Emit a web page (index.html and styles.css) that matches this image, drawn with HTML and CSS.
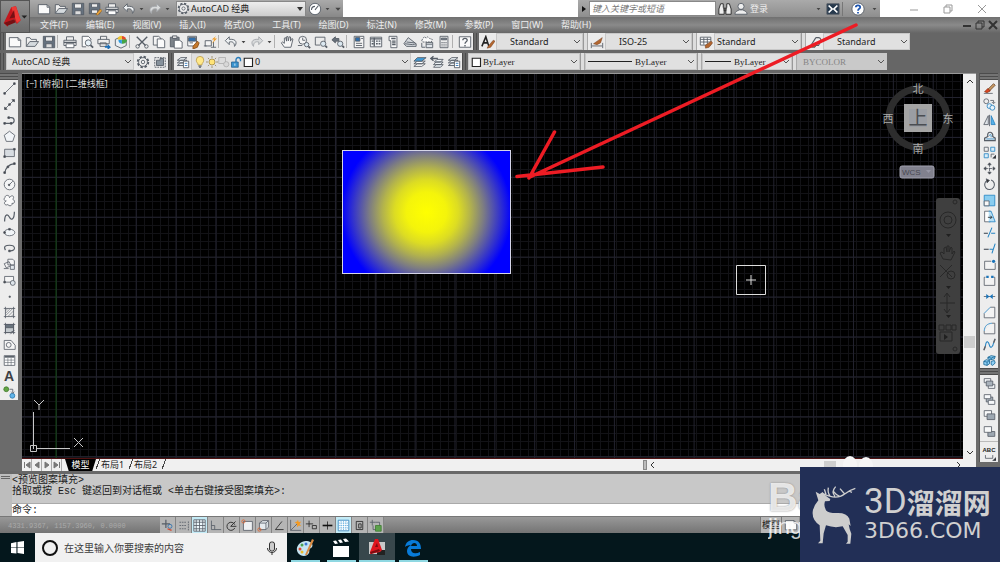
FILE: index.html
```html
<!DOCTYPE html>
<html lang="zh-CN">
<head>
<meta charset="utf-8">
<title>AutoCAD 经典</title>
<link rel="stylesheet" href="styles.css">
</head>
<body>
<svg class="defs" aria-hidden="true">
  <symbol id="new" viewBox="0 0 16 16"><path d="M1.5 3h10l3 3v7.500h-13z" fill="#fafafa"/><path d="M11.500 3v3h3"/></symbol>
  <symbol id="open" viewBox="0 0 16 16"><path d="M1.500 13V3h4l1.500 2h6v2.500" fill="#eee"/><path d="M1.500 13l4-5.500h10L11.500 13z" fill="#d5dade"/></symbol>
  <symbol id="save" viewBox="0 0 16 16"><path d="M1.500 1.500h13v13h-13z" fill="#66727f"/><path d="M4 2h8v5H4z" fill="#eee"/><path d="M4.500 14V10h7v4" fill="#ddd"/></symbol>
  <symbol id="saveas" viewBox="0 0 16 16"><path d="M1.500 1.500h12v12h-12z" fill="#66727f"/><path d="M4 2h7v4H4zM4 9h7v4H4z" fill="#eee"/><path d="M9 14l5-6 2 2-5 5z" fill="#e9a23b" stroke="#7a4a10" stroke-width=".5"/></symbol>
  <symbol id="print" viewBox="0 0 16 16"><path d="M4 6V2h8v4M1 6h14v6H1z" fill="#eee"/><path d="M3.500 10h9v4.500h-9z" fill="#fff"/><path d="M1 8.500h14" stroke-width="1.500"/></symbol>
  <symbol id="preview" viewBox="0 0 16 16"><path d="M12.500 6V4.500l-3-3h-7v12H7" fill="#fafafa"/><circle cx="9.500" cy="9" r="3.500" fill="#e8f2f8"/><path d="M12 11.500l3 3" stroke-width="2"/></symbol>
  <symbol id="publish" viewBox="0 0 16 16"><path d="M4 5V1.500h7V5M1 5h13v5H1zM3.500 9h7v4h-7z" fill="#eee"/><path d="M9 12.500h3V10l4 4-4 3v-2.500H9z" fill="#1c6db5" stroke="none"/></symbol>
  <symbol id="dwf" viewBox="0 0 16 16"><path d="M1.500 5L8 2l6 4v6l-6 3-6.500-3z" fill="#e9eef2"/><path d="M9 5V1a5 5 0 0 1 5 5z" fill="#e64a28" stroke="none"/><path d="M9 5h6a5 5 0 0 1-6 5z" fill="#44a548" stroke="none"/><path d="M9 5v5a5 5 0 0 1-4-5z" fill="#2f9be0" stroke="none"/><path d="M9 5H4a5 5 0 0 1 5-4z" fill="#f2c72c" stroke="none"/></symbol>
  <symbol id="cut" viewBox="0 0 16 16"><path d="M2 2l10 10M14 2L4 12" stroke-width="1.600"/><circle cx="3" cy="13" r="2"/><circle cx="13" cy="13" r="2"/></symbol>
  <symbol id="copyclip" viewBox="0 0 16 16"><path d="M1.500 1.500h6l2.500 2v8H1.500z" fill="#f3f3f3"/><path d="M6 4.500h6l2.500 2v8H6z" fill="#fafafa"/></symbol>
  <symbol id="paste" viewBox="0 0 16 16"><path d="M1.500 2.500h10v11h-10z" fill="#7c838a"/><path d="M4 1h5v3H4z" fill="#ddd"/><path d="M6 6h6l3 2v7H6z" fill="#fff"/></symbol>
  <symbol id="match" viewBox="0 0 16 16"><path d="M2 1.500h10v11H2z" fill="#fff"/><path d="M3 3h8v4H3z" fill="#2f71b2"/><path d="M4 9h4"/><path d="M8 13l5-6 2 2-2 5-5 2z" fill="#c5792b" stroke="#8a4f18"/></symbol>
  <symbol id="blockedit" viewBox="0 0 16 16"><path d="M2.500 6.500h7v6h-7z" fill="#f4f4f4"/><path d="M1 12.500h3M12 8v6M9 14h6"/><path d="M15 1l-5 4h3l-3 5 6-6h-3z" fill="#f29a1f" stroke="none"/></symbol>
  <symbol id="undo" viewBox="0 0 16 16"><path d="M6 2L1.500 6.500 6 11V8c4-1 6 1 6 5 3-3 3-9-6-8z" fill="#eef1f3"/></symbol>
  <symbol id="redo" viewBox="0 0 16 16"><path d="M10 2l4.500 4.500L10 11V8c-4-1-6 1-6 5-3-3-3-9 6-8z" fill="#d8dadb" stroke="#a2a6aa"/></symbol>
  <symbol id="dd" viewBox="0 0 8 16"><path d="M1 6.500h6L4 10z" fill="#444" stroke="none"/></symbol>
  <symbol id="hand" viewBox="0 0 16 16"><path d="M5 14L1.500 9l1.300-1L5 9.500V3.500L6.500 3 7.500 7V2L9 1.700l.5 5L10.500 2l1.500.3V7l1.500-3 1.300.7L12.500 14z" fill="#f6f6f6"/></symbol>
  <symbol id="zoomrt" viewBox="0 0 16 16"><circle cx="6.500" cy="6" r="4.500" fill="#f5f5f5"/><path d="M6.500 3v3h3M1 12h5"/><circle cx="11" cy="11" r="2.500" fill="#dce9f1"/><path d="M13 13l2 2" stroke-width="2"/></symbol>
  <symbol id="zoomwin" viewBox="0 0 16 16"><path d="M1.500 2.500h11V8M7 11.500H1.500v-9"/><circle cx="10.500" cy="10" r="3" fill="#dce9f1"/><path d="M13 12.500l2 2" stroke-width="2"/></symbol>
  <symbol id="zoomprev" viewBox="0 0 16 16"><path d="M5 2L1 5.500 5 9V7h4V4H5z" fill="#67707a"/><circle cx="10.500" cy="10" r="3" fill="#dce9f1"/><path d="M13 12.500l2 2" stroke-width="2"/></symbol>
  <symbol id="props" viewBox="0 0 16 16"><path d="M2.500 1.500h11v13h-11z" fill="#f5f5f5"/><path d="M4 3h5v4H4z" fill="#2b6dad"/><path d="M10.500 4h2M4.500 9.500h7M4.500 12h7"/></symbol>
  <symbol id="dcenter" viewBox="0 0 16 16"><path d="M1.500 2.500h13v11h-13z" fill="#f0f3f5"/><path d="M6 3v10M1.500 4.500h13M3 7h2M3 10h2M8 7h2M11 7h2M8 10h2M11 10h2" stroke-width="1.500"/></symbol>
  <symbol id="palette" viewBox="0 0 16 16"><path d="M3.500 1.500h9v13h-7v-8h-2z" fill="#fafafa"/><path d="M6 4h5M7 7h4M7 9h4M7 11h4" stroke-width="1.500"/></symbol>
  <symbol id="sheets" viewBox="0 0 16 16"><path d="M1 10l5-7 9 7v3H4z" fill="#d7dbdf"/><path d="M2 10l9 1 4-1M4 8l9 1"/></symbol>
  <symbol id="markup" viewBox="0 0 16 16"><path d="M2 6l3-4 2 1.500L9 2l2 2 3 1-1 3H3z" fill="#fafafa" stroke-dasharray="2 1"/><path d="M7 8.500h7.500v6H7zM2 9v5h4" fill="#e0e5ea"/><path d="M7 10.500h7"/></symbol>
  <symbol id="calc" viewBox="0 0 16 16"><path d="M3.500 1.500h9v13h-9z" fill="#f2f2f2"/><path d="M5 3.500h6v2H5z" fill="#7d8791"/><path d="M5 8.500h6M5 10.500h6M5 12.500h6" stroke-dasharray="1.500 .8"/></symbol>
  <symbol id="help" viewBox="0 0 16 16"><path d="M1.500 2h13v12h-13z" fill="#fafafa"/><path d="M5.500 6c0-3 5-3 5 0 0 2-2.500 1.500-2.500 4M8 11.500v1.500" stroke-width="1.500"/></symbol>
  <symbol id="textstyle" viewBox="0 0 16 16"><path d="M1 13L5.500 2 9 13M3 9h5" stroke="#222" stroke-width="1.800"/><path d="M8 13l6-7 2 1-5 7-4 1z" fill="#b4672f" stroke="#754020" stroke-width=".6"/></symbol>
  <symbol id="dimstyle" viewBox="0 0 16 16"><path d="M1.500 9v6M14.500 9v6M2 12.500h12"/><path d="M4 10l10-7-2 6-4 2z" fill="#b4672f" stroke="#754020" stroke-width=".6"/></symbol>
  <symbol id="tablestyle" viewBox="0 0 16 16"><path d="M1.500 2.500h12v9h-12z" fill="#fff"/><path d="M1.500 5h12M5.500 3v8M9.500 3v8M2 8h11"/><path d="M7 12l7-5 1.500 2-4 5-4 1z" fill="#b4672f" stroke="#754020" stroke-width=".6"/></symbol>
  <symbol id="leader" viewBox="0 0 16 16"><path d="M2 14L9 3M9 3h3a3 3 0 0 1 2 5l-2 4H6" fill="#eee" stroke-width="1.300"/><path d="M4 14l6-6 1 1-3 5z" fill="#b4672f"/></symbol>
  <symbol id="gear" viewBox="0 0 16 16"><circle cx="8" cy="8" r="6" stroke-width="2.200" stroke-dasharray="2.700 2"/><circle cx="8" cy="8" r="5" fill="#f1f1f1"/><circle cx="8" cy="8" r="2"/></symbol>
  <symbol id="frame" viewBox="0 0 16 16"><path d="M2 3h12v11H2z" stroke-dasharray="2 1"/><path d="M4 6h4V4h4v8H4z" fill="#87929c"/></symbol>
  <symbol id="layers" viewBox="0 0 16 16"><path d="M1.500 12l4-3h7l-4 3zM1.500 9l4-3h7l-4 3zM1.500 6l4-3h7l-4 3z" fill="#eef3f6"/><path d="M8.500 7h6v7.500h-6z" fill="#fff"/><path d="M10 9.500h3M10 12h3" stroke="#2d74b5"/></symbol>
  <symbol id="layerblue" viewBox="0 0 16 16"><path d="M1 13l4-3h9l-4 3zM1 10l4-3h9l-4 3z" fill="#fff"/><path d="M1 7l4-4h10l-5 4z" fill="#3f9ad6"/></symbol>
  <symbol id="layerprev" viewBox="0 0 16 16"><path d="M1 4h8M4 1.500L1 4l3 2.500" stroke-width="1.500"/><path d="M4 14l3-3h8l-3 3zM4 11l3-3h8l-3 3zM5 8l3-3h7l-3 3z" fill="#eef3f6"/></symbol>
  <symbol id="bulb" viewBox="0 0 16 16"><path d="M5.500 12c0-3-2.500-3-2.500-6.500a5 5 0 0 1 10 0c0 3.500-2.500 3.500-2.500 6.500z" fill="#ffe889" stroke="#b7953f"/><path d="M6 13.500h4M7 15.500h2" stroke-width="1.500"/></symbol>
  <symbol id="sun" viewBox="0 0 16 16"><path d="M8 0v16M0 8h16M2.500 2.500l11 11M13.500 2.500l-11 11" stroke="#8b7a4e" stroke-dasharray="2.500 11"/><circle cx="8" cy="8" r="4" fill="#ffe477" stroke="#9b8142"/></symbol>
  <symbol id="vpfreeze" viewBox="0 0 16 16"><path d="M1 2h9v8H1z" fill="#ddd" stroke="#aaa"/><circle cx="11" cy="11" r="3.500" fill="#d8d8d8" stroke="#aaa"/></symbol>
  <symbol id="lock" viewBox="0 0 16 16"><path d="M8 8V5a3 3 0 0 1 6 0v2" stroke="#287bb9" stroke-width="1.800"/><path d="M2 8h9v7H2z" fill="#3a94cf" stroke="#245f8d"/><path d="M6.500 10v3" stroke="#fff"/></symbol>
  <symbol id="box" viewBox="0 0 16 16"><path d="M3 3h11v11H3z" fill="#fff" stroke="#222" stroke-width="1.500"/></symbol>
  <symbol id="line" viewBox="0 0 16 16"><path d="M2 14L14 2"/><path d="M1 13h2v2H1zM13 1h2v2h-2z" fill="#333"/></symbol>
  <symbol id="xline" viewBox="0 0 16 16"><path d="M2 14L14 2"/><path d="M2 14v-3l3 3zM14 2h-3l3 3zM7 7h2v2H7z" fill="#333"/></symbol>
  <symbol id="pline" viewBox="0 0 16 16"><path d="M2 11.500h8c5 0 5-7 0-7H6" stroke-width="1.400"/><path d="M1 10.500h2v2H1zM9 10.500h2v2H9zM6 3.500h2v2H6z" fill="#333"/></symbol>
  <symbol id="polygon" viewBox="0 0 16 16"><path d="M8 1.500l6.500 5L12 14H4L1.500 6.500z" fill="#f2f5f8"/></symbol>
  <symbol id="rect" viewBox="0 0 16 16"><path d="M2 4h12v9H2z" fill="#d7dce1"/><path d="M1 12h2v2H1zM13 3h2v2h-2z" fill="#333"/></symbol>
  <symbol id="arc" viewBox="0 0 16 16"><path d="M2 14C3 7 7 3 14 2" stroke-width="1.400"/><path d="M1 12h2v2H1zM5 5h2v2H5zM13 1h2v2h-2z" fill="#333"/></symbol>
  <symbol id="circle" viewBox="0 0 16 16"><circle cx="8" cy="8" r="6.500" fill="#f4f5f6"/><path d="M8 8l4-4" /><circle cx="7.500" cy="8.500" r="1" fill="#333"/></symbol>
  <symbol id="cloud" viewBox="0 0 16 16"><path d="M8 4.500c0-4-6-3.500-5.500 0C0 6 2 9 4 8.500 0 10 2 15 6 13c2 3 6 1 5-1.500 4 1 4-4 1-5C15 3 11 0 8 4.500z" fill="#fafafa"/></symbol>
  <symbol id="spline" viewBox="0 0 16 16"><path d="M2 14C2 4 6 5 8 9s6 3 6-7" stroke-width="1.500"/></symbol>
  <symbol id="ellipse" viewBox="0 0 16 16"><ellipse cx="8" cy="8" rx="6.500" ry="4" fill="#f1f5f8"/><path d="M7 3h2v2H7zM1 7h2v2H1z" fill="#333"/></symbol>
  <symbol id="earc" viewBox="0 0 16 16"><path d="M3 10C0 5 4 4 8 4c8 0 8 7 1 7" stroke-width="1.400"/><path d="M7 10h2v2H7z" fill="#333"/></symbol>
  <symbol id="insert" viewBox="0 0 16 16"><path d="M6 1.500h6l2 2v5H6zM1.500 7l6-2.500 2.500 5-6 2.500z" fill="#f5f5f5"/><path d="M9 9h5v5H9zM1 13h6" fill="#e2e7ec"/></symbol>
  <symbol id="block" viewBox="0 0 16 16"><path d="M2 3h11v7H2z" fill="#f5f5f5"/><circle cx="12" cy="11" r="3" fill="#dde4ea"/><path d="M1 9h2v2H1z" fill="#333"/></symbol>
  <symbol id="point" viewBox="0 0 16 16"><path d="M7.500 7.500h1.500v1.500H7.500z" fill="#555"/></symbol>
  <symbol id="hatch" viewBox="0 0 16 16"><path d="M1 3h14M1 13h14M3 1v14M13 1v14"/><path d="M3 6l3-3M3 9l6-6M3 12l9-9M6 13l7-7M10 13l3-3" stroke-width=".7"/></symbol>
  <symbol id="gradienticon" viewBox="0 0 16 16"><path d="M3 3h10v4H3z" fill="#68737d"/><path d="M3 7h10v4L9 13H3z" fill="#c4cace"/><path d="M1 3h14M1 13h14M3 1v14M13 1v14M9 15l5-5"/></symbol>
  <symbol id="region" viewBox="0 0 16 16"><path d="M1.500 3H10l5 6v5H1.500z" fill="#f5f5f5"/><circle cx="7" cy="8.500" r="3"/></symbol>
  <symbol id="table" viewBox="0 0 16 16"><path d="M1.500 2h13v12h-13z" fill="#fff"/><path d="M2 3.500h12" stroke-width="2"/><path d="M2 7.500h12M2 10.500h12M6 5v9M10 5v9" stroke-width=".7"/></symbol>
  <symbol id="addsel" viewBox="0 0 16 16"><circle cx="4" cy="4" r="3" fill="#63a545" stroke="#427b2c"/><circle cx="11.500" cy="12" r="3" fill="#61b5ea" stroke="#2676ae"/><path d="M8 4h4v4m-2-1l2 2 2-2"/></symbol>
  <symbol id="erase" viewBox="0 0 16 16"><path d="M1 14h11"/><path d="M6 9l7-7 2 2-7 7z" fill="#c99a62" stroke="#69472c"/><path d="M2 12l4-4 3 3-4 2z" fill="#e0451e" stroke="#8a3218"/></symbol>
  <symbol id="copy" viewBox="0 0 16 16"><circle cx="4" cy="4" r="3"/><path d="M9 3h4v3m-2-1l2 2 2-2"/><g stroke="#257fbd"><circle cx="8" cy="10" r="3" fill="#e7f3fb"/><circle cx="11.500" cy="12" r="3" fill="#e7f3fb"/></g></symbol>
  <symbol id="mirror" viewBox="0 0 16 16"><path d="M6.500 2v11H1z" fill="#dfe4e8"/><path d="M8 1v14"/><path d="M10 2v11h5z" fill="#56b2ea" stroke="#267fbd"/></symbol>
  <symbol id="offset" viewBox="0 0 16 16"><path d="M2 13v-3l4-2c-2-7 7-7 6 0l3 2v3z" stroke-width="1.500"/><path d="M4 11h10M8 7c0-2 2-2 2 0v2" stroke="#2484c4"/></symbol>
  <symbol id="array" viewBox="0 0 16 16"><path d="M1.500 1.500h5v5h-5z"/><g stroke="#2484c4"><path d="M9.500 1.500h5v5h-5zM1.500 9.500h5v5h-5z" fill="#d9edf9"/></g><path d="M10 14v-4h4"/><path d="M12 15h4v-4z" fill="#222"/></symbol>
  <symbol id="move" viewBox="0 0 16 16"><path d="M8 2v12M2 8h12" stroke-dasharray="4 1"/><path d="M8 1l2 2.500H6zM8 15l2-2.500H6zM1 8l2.500-2v4zM15 8l-2.500-2v4z" fill="#333"/></symbol>
  <symbol id="rotate" viewBox="0 0 16 16"><path d="M5 3a6 6 0 1 0 5-.5" stroke-width="1.300"/><path d="M4 1l4 2-3 3z" fill="#333"/></symbol>
  <symbol id="scale" viewBox="0 0 16 16"><path d="M1.500 1.500h13v13h-13z" fill="#8acdf0" stroke="#2484c4"/><path d="M1.500 8.500h6v6h-6z" fill="#f8f8f8"/></symbol>
  <symbol id="stretch" viewBox="0 0 16 16"><path d="M2 1.500h7v13H2z" fill="#fff"/><path d="M7 1.500h3l5 13H7" fill="#b7dff5" stroke="#2484c4"/><path d="M6 9h5M9 7l2 2-2 2" stroke="#222"/></symbol>
  <symbol id="trim" viewBox="0 0 16 16"><path d="M1 9h5" stroke-width="1.500"/><path d="M6 14l5-12M10 9h5" stroke="#2484c4" stroke-width="1.300"/></symbol>
  <symbol id="extend" viewBox="0 0 16 16"><path d="M1 9h6" stroke-width="1.500"/><path d="M8 9h4M11 14l4-12" stroke="#2484c4" stroke-width="1.300"/></symbol>
  <symbol id="breakpt" viewBox="0 0 16 16"><path d="M10 4H2v10h13V6" fill="#f3f3f3"/><circle cx="13" cy="4" r="2" fill="#1b74b9" stroke="none"/></symbol>
  <symbol id="break" viewBox="0 0 16 16"><path d="M3 4H1.500v10h13V4H13" fill="#f3f3f3"/><path d="M4 2h3v3H4zM10 2h3v3h-3z" fill="#1b74b9" stroke="none"/></symbol>
  <symbol id="join" viewBox="0 0 16 16"><path d="M1 8h14"/><path d="M4 5l4 3-4 3zM12 5L8 8l4 3z" fill="#1b74b9" stroke="none"/></symbol>
  <symbol id="chamfer" viewBox="0 0 16 16"><path d="M1.500 9v5.500h13v-13H9" fill="#f3f3f3"/><path d="M1.500 9L9 1.500" stroke="#2484c4"/></symbol>
  <symbol id="fillet" viewBox="0 0 16 16"><path d="M1.500 11v3.500h13v-13H11" fill="#f3f3f3"/><path d="M1.500 11C2 5 5 2 11 1.500" stroke="#2484c4"/></symbol>
  <symbol id="blend" viewBox="0 0 16 16"><path d="M1 15l2-5M13 6l2-5" stroke-width="1.800"/><path d="M3 10C4 1 7 5 8 9s4 3 5-3" stroke="#2484c4" stroke-width="1.300"/></symbol>
  <symbol id="explode" viewBox="0 0 16 16"><g stroke="#186594" fill="#8fd0f5"><path d="M1 9l3-2 4 1v4l-3 2-4-1zM6 4l4-2 5 1-1 3-5 1-3-1zM10 9l4-1 1 3-3 3-2-1z"/></g><path d="M1 9l4 1 3-2M5 10v4M6 4l4 1 5-2M10 5v2" stroke="#186594"/></symbol>
  <symbol id="order" viewBox="0 0 16 16"><path d="M1.500 2h8v5h-8zM6.500 9h8v5h-8z" fill="#f6f8fa"/><path d="M4 5h8v6H4z" fill="#a9b2bb"/></symbol>
  <symbol id="orderback" viewBox="0 0 16 16"><path d="M4 5h8v6H4z" fill="#a9b2bb"/><path d="M1.500 2h8v5h-8zM6.500 9h8v5h-8z" fill="#f6f8fa"/></symbol>
  <symbol id="orderup" viewBox="0 0 16 16"><path d="M1.500 2h9v7h-9z" fill="#f8f9fa"/><path d="M5 6h9.500v7H5z" fill="#9da7b1"/></symbol>
  <symbol id="order2" viewBox="0 0 16 16"><path d="M6 8h8.500v6H6z" fill="#9da7b1"/><path d="M1.500 2h9v7h-9z" fill="#f8f9fa"/></symbol>
  <symbol id="snap" viewBox="0 0 16 16"><path d="M6 1v10M1 6h10" stroke-width="1.500"/><circle cx="11" cy="9" r="2.500" stroke="#2a6ead"/><path d="M8 12l5 2" stroke="#d4482c" stroke-width="1.500"/></symbol>
  <symbol id="grid" viewBox="0 0 16 16"><path d="M1 1h14v14H1z" fill="#eef8fc"/><path d="M1 4h14M1 8h14M1 12h14M4 1v14M8 1v14M12 1v14"/></symbol>
  <symbol id="infer" viewBox="0 0 16 16"><path d="M3 4h8M3 8h8M3 12h8M14 3v11" stroke-dasharray="2 1"/></symbol>
  <symbol id="ortho" viewBox="0 0 16 16"><path d="M3 2v11h12M3 8h4v5"/></symbol>
  <symbol id="polar" viewBox="0 0 16 16"><path d="M12 7a5 5 0 1 0 0 4M7 9h7M7 9l6-6" stroke="#333" stroke-width="1.200"/></symbol>
  <symbol id="osnap" viewBox="0 0 16 16"><path d="M3 3h11v11H3z" fill="#eef0f2"/><circle cx="3" cy="3" r="2" stroke="#df632d"/></symbol>
  <symbol id="cube3" viewBox="0 0 16 16"><path d="M3 5l4-3h7v8l-3 3H3z" fill="#e5eaee"/><path d="M3 5h8v8M11 5l3-3"/><circle cx="3" cy="13" r="2" stroke="#df632d"/></symbol>
  <symbol id="angle" viewBox="0 0 16 16"><path d="M13 13H3L11 3" stroke="#222"/></symbol>
  <symbol id="ducs" viewBox="0 0 16 16"><path d="M2 1v13h13M2 14l9-9"/><path d="M11 1l1 3 3-1-2 3 2 3-3-1-2 2V6L7 4l3-1z" fill="#f59a21" stroke="none"/></symbol>
  <symbol id="dyn" viewBox="0 0 16 16"><path d="M5 2v8M1 6h9M9 8h5v4H9z" stroke="#222"/></symbol>
  <symbol id="lwt" viewBox="0 0 16 16"><path d="M8 3v10" stroke="#222"/><path d="M2 8h12" stroke="#111" stroke-width="2"/></symbol>
  <symbol id="tpy" viewBox="0 0 16 16"><path d="M1.500 1.500h13v13h-13z" fill="#fff" stroke="#2d80bd"/><path d="M2 5h12M2 8h12M2 11h12M5 2v12M8 2v12M11 2v12" stroke="#62afe0" stroke-dasharray="1.500 1"/></symbol>
  <symbol id="qp" viewBox="0 0 16 16"><path d="M4 3h8v10H4zM7 6h3v5H7z" stroke="#222"/></symbol>
  <symbol id="cycle" viewBox="0 0 16 16"><path d="M4 1v7M1 4h7M8 4h5v5M5 8v5h4"/><path d="M8 8h7v7H8z" fill="#5ca14c" stroke="#3f7d31"/></symbol>
  <symbol id="mintri" viewBox="0 0 8 8"><path d="M2 1l4 3-4 3z" fill="#111" stroke="none"/></symbol>
  <symbol id="min" viewBox="0 0 12 12"><path d="M2 7h8"/></symbol>
  <symbol id="restore" viewBox="0 0 12 12"><path d="M4 4V2h6v6H8M2 4h6v6H2z"/></symbol>
  <symbol id="close" viewBox="0 0 12 12"><path d="M2 2l8 8M10 2l-8 8"/></symbol>
</svg>

<div class="app">
  <header class="head">
    <button class="appbtn" aria-label="应用程序菜单">
      <svg viewBox="0 0 30 29"><path d="M3 21L11 4l5-1 5 15-4 4-3-5-5 2-2 6z" fill="#c3171c"/><path d="M11 4l5-1 5 15-4 3z" fill="#ec3a36"/><path d="M9 16l5-9 1 8zM3 21l11-4 2 3-9 4z" fill="#761013"/><path d="M22 13h6l-3 3z" fill="#222"/></svg>
    </button>
    <div class="headrows">
      <div class="titlebar">
        <div class="quick">
          <button aria-label="新建"><svg class="ic"><use href="#new"/></svg></button>
          <button aria-label="打开"><svg class="ic"><use href="#open"/></svg></button>
          <button aria-label="保存"><svg class="ic"><use href="#save"/></svg></button>
          <button aria-label="另存为"><svg class="ic"><use href="#saveas"/></svg></button>
          <button aria-label="打印"><svg class="ic"><use href="#print"/></svg></button>
          <button aria-label="放弃"><svg class="ic"><use href="#undo"/></svg></button>
          <button class="narrow" aria-label="放弃列表"><svg class="ddi"><use href="#dd"/></svg></button>
          <button aria-label="重做"><svg class="ic"><use href="#redo"/></svg></button>
          <button class="narrow" aria-label="重做列表"><svg class="ddi"><use href="#dd"/></svg></button>
          <div class="wsbox"><svg class="ic"><use href="#gear"/></svg><select class="solid" aria-label="工作空间"><option>AutoCAD 经典</option></select></div>
          <button aria-label="仪表"><svg class="ic" viewBox="0 0 16 16"><circle cx="8" cy="8" r="6.500" fill="#fff"/><path d="M8 9l4-5M4 9a4 4 0 0 1 4-4" stroke-width="1.200"/></svg></button>
          <button class="narrow" aria-label="列表"><svg class="ddi"><use href="#dd"/></svg></button>
          <button class="narrow" aria-label="自定义"><svg class="ddi big"><use href="#dd"/></svg></button>
        </div>
        <div class="info">
          <button class="narrow" aria-label="展开"><svg class="tri"><use href="#mintri"/></svg></button>
          <input class="keyword" type="text" placeholder="键入关键字或短语" aria-label="键入关键字或短语">
          <button aria-label="搜索"><svg class="ic" viewBox="0 0 16 16"><path d="M3 2h3v4l1 2v6H1V8zM10 2h3l2 6v6H9V8l1-2zM7 7h2v3H7z" fill="#eee" stroke="#222"/></svg></button>
          <button class="login"><svg class="ic" viewBox="0 0 16 16"><circle cx="8" cy="5" r="3.500" fill="#eee"/><path d="M1 14h14c0-3-3-4-5-5H6c-2 1-5 2-5 5z" fill="#eee"/></svg><span>登录</span><svg class="ddi"><use href="#dd"/></svg></button>
          <button aria-label="Exchange"><svg class="ic" viewBox="0 0 16 16"><path d="M1 2h14v12H1z" fill="#25384c"/><path d="M3 4l4 4-4 4M13 4L9 8l4 4" stroke="#fff" stroke-width="2"/></svg></button>
          <button class="helpbtn" aria-label="帮助"><svg class="ic" viewBox="0 0 16 16"><circle cx="8" cy="8" r="7" fill="#fff"/><path d="M5.500 6c0-3 5-3 5 0 0 2-2.500 1.500-2.500 4M8 11.500v1.500" stroke="#1d55b0" stroke-width="2"/></svg></button>
          <button class="narrow" aria-label="帮助列表"><svg class="ddi"><use href="#dd"/></svg></button>
        </div>
        <div class="winctl">
          <button aria-label="最小化"><svg><use href="#min"/></svg></button>
          <button aria-label="还原"><svg><use href="#restore"/></svg></button>
          <button aria-label="关闭"><svg><use href="#close"/></svg></button>
        </div>
      </div>
      <nav class="menu">
        <button>文件(F)</button><button>编辑(E)</button><button>视图(V)</button><button>插入(I)</button><button>格式(O)</button><button>工具(T)</button><button>绘图(D)</button><button>标注(N)</button><button>修改(M)</button><button>参数(P)</button><button>窗口(W)</button><button>帮助(H)</button>
        <div class="docctl">
          <button aria-label="最小化图形"><svg><use href="#min"/></svg></button>
          <button aria-label="还原图形"><svg><use href="#restore"/></svg></button>
          <button aria-label="关闭图形"><svg><use href="#close"/></svg></button>
        </div>
      </nav>
    </div>
  </header>

  <div class="bar">
    <span class="grip"></span>
    <div class="panel">
      <button aria-label="新建"><svg class="ic"><use href="#new"/></svg></button>
      <button aria-label="打开"><svg class="ic"><use href="#open"/></svg></button>
      <button aria-label="保存"><svg class="ic"><use href="#save"/></svg></button>
      <span class="sep"></span>
      <button aria-label="打印"><svg class="ic"><use href="#print"/></svg></button>
      <button aria-label="打印预览"><svg class="ic"><use href="#preview"/></svg></button>
      <button aria-label="发布"><svg class="ic"><use href="#publish"/></svg></button>
      <button aria-label="三维 DWF"><svg class="ic"><use href="#dwf"/></svg></button>
      <span class="sep"></span>
      <button aria-label="剪切"><svg class="ic"><use href="#cut"/></svg></button>
      <button aria-label="复制"><svg class="ic"><use href="#copyclip"/></svg></button>
      <button aria-label="粘贴"><svg class="ic"><use href="#paste"/></svg></button>
      <button aria-label="特性匹配"><svg class="ic"><use href="#match"/></svg></button>
      <button aria-label="块编辑器"><svg class="ic"><use href="#blockedit"/></svg></button>
      <span class="sep"></span>
      <button aria-label="放弃"><svg class="ic"><use href="#undo"/></svg></button>
      <button class="narrow" aria-label="放弃列表"><svg class="ddi"><use href="#dd"/></svg></button>
      <button aria-label="重做"><svg class="ic"><use href="#redo"/></svg></button>
      <button class="narrow" aria-label="重做列表"><svg class="ddi"><use href="#dd"/></svg></button>
      <span class="sep"></span>
      <button aria-label="平移"><svg class="ic"><use href="#hand"/></svg></button>
      <button aria-label="实时缩放"><svg class="ic"><use href="#zoomrt"/></svg></button>
      <button aria-label="窗口缩放"><svg class="ic"><use href="#zoomwin"/></svg></button>
      <button aria-label="缩放上一个"><svg class="ic"><use href="#zoomprev"/></svg></button>
      <span class="sep"></span>
      <button aria-label="特性"><svg class="ic"><use href="#props"/></svg></button>
      <button aria-label="设计中心"><svg class="ic"><use href="#dcenter"/></svg></button>
      <button aria-label="工具选项板"><svg class="ic"><use href="#palette"/></svg></button>
      <button aria-label="图纸集"><svg class="ic"><use href="#sheets"/></svg></button>
      <button aria-label="标记集"><svg class="ic"><use href="#markup"/></svg></button>
      <button aria-label="计算器"><svg class="ic"><use href="#calc"/></svg></button>
      <span class="sep"></span>
      <button aria-label="帮助"><svg class="ic"><use href="#help"/></svg></button>
    </div>
    <span class="grip"></span>
    <div class="panel">
      <button aria-label="文字样式"><svg class="ic"><use href="#textstyle"/></svg></button>
      <div class="combo w-style"><select class="indent" aria-label="文字样式"><option>Standard</option></select></div>
      <span class="lgrip"></span>
      <button aria-label="标注样式"><svg class="ic"><use href="#dimstyle"/></svg></button>
      <div class="combo w-style"><select class="indent" aria-label="标注样式"><option>ISO-25</option></select></div>
      <span class="lgrip"></span>
      <button aria-label="表格样式"><svg class="ic"><use href="#tablestyle"/></svg></button>
      <div class="combo w-style"><select class="tight" aria-label="表格样式"><option>Standard</option></select></div>
      <span class="lgrip"></span>
      <button aria-label="多重引线样式"><svg class="ic"><use href="#leader"/></svg></button>
      <div class="combo w-style"><select class="indent" aria-label="多重引线样式"><option>Standard</option></select></div>
    </div>
  </div>

  <div class="bar">
    <span class="grip"></span>
    <div class="panel">
      <div class="combo w-space"><select aria-label="工作空间"><option>AutoCAD 经典</option></select></div>
      <button aria-label="工作空间设置"><svg class="ic"><use href="#gear"/></svg></button>
      <button aria-label="我的工作空间"><svg class="ic"><use href="#frame"/></svg></button>
    </div>
    <span class="grip"></span>
    <div class="panel">
      <button aria-label="图层特性"><svg class="ic"><use href="#layers"/></svg></button>
      <div class="combo w-layer">
        <svg class="ic sm"><use href="#bulb"/></svg><svg class="ic sm"><use href="#sun"/></svg><svg class="ic sm"><use href="#vpfreeze"/></svg><svg class="ic sm"><use href="#lock"/></svg><svg class="ic sm"><use href="#box"/></svg>
        <select aria-label="图层"><option>0</option></select>
      </div>
      <button aria-label="置为当前"><svg class="ic"><use href="#layerblue"/></svg></button>
      <button aria-label="上一个图层"><svg class="ic"><use href="#layerprev"/></svg></button>
      <button aria-label="图层状态"><svg class="ic"><use href="#layers"/></svg></button>
    </div>
    <span class="grip"></span>
    <div class="panel serif">
      <div class="combo w-color"><svg class="ic sm"><use href="#box"/></svg><select aria-label="颜色"><option>ByLayer</option></select></div>
      <span class="lgrip"></span>
      <div class="combo w-color"><span class="swatch long"></span><select aria-label="线型"><option>ByLayer</option></select></div>
      <span class="lgrip"></span>
      <div class="combo w-weight"><span class="swatch"></span><select aria-label="线宽"><option>ByLayer</option></select></div>
      <span class="lgrip"></span>
      <div class="combo w-weight off"><select disabled aria-label="打印样式"><option>BYCOLOR</option></select></div>
    </div>
  </div>

  <main class="work">
    <div class="side">
      <span class="hgrip"></span>
      <button aria-label="直线"><svg class="ic"><use href="#line"/></svg></button>
      <button aria-label="构造线"><svg class="ic"><use href="#xline"/></svg></button>
      <button aria-label="多段线"><svg class="ic"><use href="#pline"/></svg></button>
      <button aria-label="多边形"><svg class="ic"><use href="#polygon"/></svg></button>
      <button aria-label="矩形"><svg class="ic"><use href="#rect"/></svg></button>
      <button aria-label="圆弧"><svg class="ic"><use href="#arc"/></svg></button>
      <button aria-label="圆"><svg class="ic"><use href="#circle"/></svg></button>
      <button aria-label="修订云线"><svg class="ic"><use href="#cloud"/></svg></button>
      <button aria-label="样条曲线"><svg class="ic"><use href="#spline"/></svg></button>
      <button aria-label="椭圆"><svg class="ic"><use href="#ellipse"/></svg></button>
      <button aria-label="椭圆弧"><svg class="ic"><use href="#earc"/></svg></button>
      <button aria-label="插入块"><svg class="ic"><use href="#insert"/></svg></button>
      <button aria-label="创建块"><svg class="ic"><use href="#block"/></svg></button>
      <button aria-label="点"><svg class="ic"><use href="#point"/></svg></button>
      <button aria-label="图案填充"><svg class="ic"><use href="#hatch"/></svg></button>
      <button aria-label="渐变色"><svg class="ic"><use href="#gradienticon"/></svg></button>
      <button aria-label="面域"><svg class="ic"><use href="#region"/></svg></button>
      <button aria-label="表格"><svg class="ic"><use href="#table"/></svg></button>
      <button class="mtext">A</button>
      <button aria-label="添加选定对象"><svg class="ic"><use href="#addsel"/></svg></button>
    </div>

    <section class="center">
      <div class="viewrow">
        <div class="canvas">
          <svg class="gridlines" aria-hidden="true">
            <defs>
              <pattern id="minor" width="8" height="8" patternUnits="userSpaceOnUse" x="2" y="7"><path d="M0 .5h8M.5 0v8" stroke="#121216"/></pattern>
              <pattern id="major" width="39.850" height="39.900" patternUnits="userSpaceOnUse" x="34" y="23"><path d="M0 .5h40M.5 0v40" stroke="#22222e"/></pattern>
            </defs>
            <rect width="100%" height="100%" fill="url(#minor)"/>
            <rect width="100%" height="100%" fill="url(#major)"/>
            <path d="M34 0v2000" stroke="#0f450f" stroke-width="1"/>
          </svg>
          <div class="viewlabel">[−] [俯视] [二维线框]</div>
          <div class="hatchfill"></div>
          <svg class="crosshair" viewBox="0 0 30 30"><path d="M.5.500h29v29H.5zM10 15h10M15 10v10" fill="none" stroke="#ddd"/></svg>
          <svg class="ucs" viewBox="0 0 60 56"><path d="M5.500 14v37M8 50.500h34M2.500 47.500h6v6h-6zM6 2l5 5 5-5M11 7v5M46 40l9 9M55 40l-9 9" fill="none" stroke="#c8c8c8"/></svg>
          <svg class="viewcube" viewBox="0 0 76 104">
            <circle cx="38" cy="38" r="29" fill="none" stroke="#2d2d2d" stroke-width="7"/>
            <path d="M24 24h28v28H24z" fill="#a4a4a4"/><path d="M29 29h18v18H29z" fill="#9a9da3"/>
            <g class="cubetext"><text class="up" x="38" y="45">上</text><text x="38" y="13">北</text><text x="8" y="43">西</text><text x="68" y="43">东</text><text x="38" y="73">南</text></g>
            <rect x="20" y="86" width="34" height="12" rx="2" fill="#81818e" stroke="#a2a2b0"/><text class="wcs" x="22" y="95">WCS</text><path d="M46 90h5l-2.500 3z" fill="#9797a6"/>
          </svg>
          <svg class="navbar" viewBox="0 0 24 156"><rect width="24" height="156" rx="3" fill="#3f3f3f"/><g fill="none" stroke="#282828"><circle cx="12" cy="22" r="8"/><circle cx="12" cy="22" r="4"/><circle cx="19" cy="4" r="2"/><path d="M7 61L4 55l2-1 2 2v-6l2-1 1 5v-6h2v6l2-5 1 1v6l2-3 1 1-4 8zM4 67l12 12M16 67L4 79M11 96v18M4 105h15M8 99l3-4 3 4M8 111l3 4 3-4M3 127h5v5H3zM10 127h5v5h-5zM16 127h4v5h-4zM4 134h12v9H4z"/><circle cx="15" cy="77" r="4"/><circle cx="19" cy="151" r="2"/></g><path d="M10 36h5l-2.500 3zM10 88h5l-2.500 3zM10 117h5l-2.500 3zM8 136l4 3-4 3z" fill="#202020"/></svg>
        </div>
        <div class="vscroll">
          <svg viewBox="0 0 8 8"><path d="M1 6l3-3 3 3"/></svg>
          <span class="vthumb"></span>
          <svg viewBox="0 0 8 8"><path d="M1 2l3 3 3-3"/></svg>
        </div>
      </div>
      <div class="tabs">
        <div class="tabnav">
          <button aria-label="第一个"><svg viewBox="0 0 8 8"><path d="M1.500 1v6M7 1L3 4l4 3z"/></svg></button>
          <button aria-label="上一个"><svg viewBox="0 0 8 8"><path d="M6 1L2 4l4 3z"/></svg></button>
          <button aria-label="下一个"><svg viewBox="0 0 8 8"><path d="M2 1l4 3-4 3z"/></svg></button>
          <button aria-label="最后一个"><svg viewBox="0 0 8 8"><path d="M6.500 1v6M1 1l4 3-4 3z"/></svg></button>
        </div>
        <button class="tab on">模型</button><button class="tab">布局1</button><button class="tab">布局2</button><span class="slash"></span>
        <div class="hscroll"><span class="split"></span><svg viewBox="0 0 8 8"><path d="M5 1L2 4l3 3"/></svg><span class="hthumb"></span><svg viewBox="0 0 8 8"><path d="M3 1l3 3-3 3"/></svg></div>
      </div>
    </section>

    <div class="side right">
      <span class="hgrip"></span>
      <button aria-label="删除"><svg class="ic"><use href="#erase"/></svg></button>
      <button aria-label="复制"><svg class="ic"><use href="#copy"/></svg></button>
      <button aria-label="镜像"><svg class="ic"><use href="#mirror"/></svg></button>
      <button aria-label="偏移"><svg class="ic"><use href="#offset"/></svg></button>
      <button aria-label="阵列"><svg class="ic"><use href="#array"/></svg></button>
      <button aria-label="移动"><svg class="ic"><use href="#move"/></svg></button>
      <button aria-label="旋转"><svg class="ic"><use href="#rotate"/></svg></button>
      <button aria-label="缩放"><svg class="ic"><use href="#scale"/></svg></button>
      <button aria-label="拉伸"><svg class="ic"><use href="#stretch"/></svg></button>
      <button aria-label="修剪"><svg class="ic"><use href="#trim"/></svg></button>
      <button aria-label="延伸"><svg class="ic"><use href="#extend"/></svg></button>
      <button aria-label="打断于点"><svg class="ic"><use href="#breakpt"/></svg></button>
      <button aria-label="打断"><svg class="ic"><use href="#break"/></svg></button>
      <button aria-label="合并"><svg class="ic"><use href="#join"/></svg></button>
      <button aria-label="倒角"><svg class="ic"><use href="#chamfer"/></svg></button>
      <button aria-label="圆角"><svg class="ic"><use href="#fillet"/></svg></button>
      <button aria-label="光顺曲线"><svg class="ic"><use href="#blend"/></svg></button>
      <button aria-label="分解"><svg class="ic"><use href="#explode"/></svg></button>
      <span class="hgrip"></span>
      <button aria-label="前置"><svg class="ic"><use href="#order"/></svg></button>
      <button aria-label="后置"><svg class="ic"><use href="#orderback"/></svg></button>
      <button aria-label="置于对象之上"><svg class="ic"><use href="#orderup"/></svg></button>
      <button aria-label="置于对象之下"><svg class="ic"><use href="#order2"/></svg></button>
      <span class="hsep"></span>
      <button class="abc"><span>ABC</span><svg class="ic" viewBox="0 0 16 8"><path d="M3 1v4h9V1"/><path d="M12 8h4V4z" fill="#111"/></svg></button>
    </div>
  </main>

  <section class="cmd">
    <span class="cmdgrip"></span>
    <div class="cmdbody">
      <div class="history"><p>&lt;预览图案填充&gt;</p><p>拾取或按 Esc 键返回到对话框或 &lt;单击右键接受图案填充&gt;:</p></div>
      <div class="prompt"><label for="cmdline">命令:</label><input id="cmdline" type="text"></div>
    </div>
  </section>

  <footer class="status">
    <span class="coords">4331.9367, 1157.3960, 0.0000</span>
    <div class="toggles">
      <button aria-label="推断约束"><svg class="ic"><use href="#snap"/></svg></button>
      <button aria-label="捕捉"><svg class="ic"><use href="#infer"/></svg></button>
      <button class="lit" aria-label="栅格"><svg class="ic"><use href="#grid"/></svg></button>
      <button aria-label="正交"><svg class="ic"><use href="#ortho"/></svg></button>
      <button aria-label="极轴"><svg class="ic"><use href="#polar"/></svg></button>
      <button aria-label="对象捕捉"><svg class="ic"><use href="#osnap"/></svg></button>
      <button aria-label="三维对象捕捉"><svg class="ic"><use href="#cube3"/></svg></button>
      <button aria-label="对象追踪"><svg class="ic"><use href="#angle"/></svg></button>
      <button aria-label="动态 UCS"><svg class="ic"><use href="#ducs"/></svg></button>
      <button aria-label="动态输入"><svg class="ic"><use href="#dyn"/></svg></button>
      <button aria-label="线宽"><svg class="ic"><use href="#lwt"/></svg></button>
      <button class="lit" aria-label="透明度"><svg class="ic"><use href="#tpy"/></svg></button>
      <button aria-label="快捷特性"><svg class="ic"><use href="#qp"/></svg></button>
      <button aria-label="选择循环"><svg class="ic"><use href="#cycle"/></svg></button>
    </div>
    <div class="models"><button class="model">模型</button><button aria-label="布局"><svg class="ic"><use href="#new"/></svg></button></div>
  </footer>

  <div class="taskbar">
    <button class="start" aria-label="开始"><svg viewBox="0 0 12 12"><path d="M0 2l5-1v5H0zM6 1l6-1v6H6zM0 6.500h5v5L0 11zM6 6.500h6V12l-6-1z" fill="#fff"/></svg></button>
    <div class="search">
      <svg viewBox="0 0 18 18"><circle cx="9" cy="9" r="7" fill="none" stroke="#111" stroke-width="2"/></svg>
      <input type="text" placeholder="在这里输入你要搜索的内容" aria-label="在这里输入你要搜索的内容">
      <svg viewBox="0 0 18 18"><rect x="6.500" y="3" width="5" height="9" rx="2" fill="#ccc" stroke="#333"/><path d="M4.500 9c0 6 9 6 9 0M9 13.500V16" fill="none" stroke="#333"/></svg>
    </div>
    <button class="task" aria-label="画图"><svg viewBox="0 0 20 20"><path d="M3 15C-1 9 6 2 12 3c7 1 6 6 4 7-3 1-1 3-2 5-2 4-8 4-11 0z" fill="#c5e4f1"/><circle cx="5" cy="11" r="1.500" fill="#d84a31"/><circle cx="7" cy="7" r="1.500" fill="#48a351"/><circle cx="11" cy="6" r="1.500" fill="#3b76d1"/><circle cx="7" cy="14" r="1.500" fill="#edbb29"/><path d="M10 17L17 1l2 1-7 15z" fill="#d98b42"/></svg></button>
    <button class="task" aria-label="视频"><svg viewBox="0 0 20 20"><path d="M2 8h16v11H2zM2 3l3-.500 2 3-3 .5zM7 2l3-.500 2 3-3 .5zM12 1l3-.500 3 3-4 .5z" fill="#fff"/></svg></button>
    <button class="task active" aria-label="AutoCAD"><svg viewBox="0 0 20 20"><path d="M2 4h16v12H2z" fill="#c9c9c9"/><path d="M10 12h8v5h-8z" fill="#222"/><path d="M3 14L8 1l3 0 4 11-2 2-10 2z" fill="#e0161e"/><path d="M8 9l2-4 1 4zM3 14l9-3 1 2-9 3z" fill="#7e0b10"/></svg></button>
    <button class="task" aria-label="Edge"><svg viewBox="0 0 20 20"><path d="M2 9C3 4 6 2 10 2c6 0 8 4 8 9H8c0 5 5 5 9 3v3c-6 3-13 2-13-4 0-3 2-5 4-6-3 0-5 1-6 2zm6-1h6c0-4-5-4-6 0z" fill="#087bd8"/></svg></button>
  </div>
</div>

<svg class="arrow" viewBox="0 0 1000 562" aria-hidden="true"><path d="M856 25L530 177M554.500 132L529 178M517 176.500L603 167" fill="none" stroke="#ed1c24" stroke-width="3.500" stroke-linecap="round"/></svg>

<div class="wm" aria-hidden="true">
  <svg class="paw" viewBox="0 0 32 14"><ellipse cx="8" cy="9" rx="7" ry="9"/><ellipse cx="24" cy="10" rx="7" ry="9"/></svg>
  <span class="wm-big">Ba</span><span class="wm-small">jing</span>
</div>
<div class="brand">
  <svg viewBox="245 255 135 180"><path d="M256 275l12 7 9-6q6 10 23 21l-2 6-14 1q-5 15 4 28 8 8 35 7 27 0 34 17l4 22-6-5q2 15 8 28l-3 30h-13l5-6v-20l-15-26q-25 6-50-3l-7 24-3 30h-14l7-8-2-46q-23-16-21-40 1-16 17-35z" fill="#cdcdcd"/><path d="M278 281q40 20 65 1 15-12 32-17M287 283l-5-15M299 287q-8-8-5-24M314 289q-12-14 2-29M328 289q-12-5-18-14M343 282l-14-16M355 273l10 4" fill="none" stroke="#cdcdcd" stroke-width="4"/></svg>
  <div class="brandtext"><div class="brandname"><span>3D</span>溜溜网</div><div class="brandurl">3D66.COM</div></div>
</div>
</body>
</html>
```
FILE: styles.css
```css
* { box-sizing: border-box; }
body { margin: 0; background: #666; font: 9px/12px "Noto Sans", "Noto Sans CJK SC", sans-serif; color: #1c1c1c; position: relative; }
button, input, select { font: inherit; color: inherit; border: 0; margin: 0; padding: 0; background: none; border-radius: 0; outline: 0; }
button { display: flex; align-items: center; justify-content: center; }
svg { display: block; flex: none; }
p { margin: 0; }
.defs { position: absolute; width: 0; height: 0; }
.app { display: flex; flex-direction: column; min-height: 100vh; }
.ic { width: 14px; height: 14px; fill: none; stroke: #565d66; stroke-width: 1; }
.ic.sm { width: 12px; height: 12px; }
.ddi { width: 5px; height: 10px; }
.ddi.big { width: 8px; height: 14px; }
.tri { width: 8px; height: 8px; }

.head { display: flex; height: 33px; background: #777; }
.appbtn { width: 30px; background: linear-gradient(#909090, #6c6c6c); border: 1px solid #555; }
.appbtn svg { width: 28px; height: 28px; }
.headrows { flex: 1; display: flex; flex-direction: column; }
.titlebar { display: flex; height: 17px; background: #fff; justify-content: space-between; }
.quick { display: flex; align-items: center; background: linear-gradient(#aaa, #888); padding-left: 5px; }
.quick > button { width: 17px; }
.quick > .narrow { width: 9px; }
.quick > .narrow:last-child { width: 11px; }
.wsbox { display: flex; align-items: center; width: 130px; height: 16px; margin-left: 4px; background: linear-gradient(#eee, #ccc); border: 1px solid #888; }
.wsbox .ic { width: 13px; height: 13px; }
select { appearance: none; flex: 1; min-width: 0; height: 100%; padding: 0 14px 0 5px; opacity: 1; background: url("data:image/svg+xml,%3Csvg xmlns='http://www.w3.org/2000/svg' width='8' height='8'%3E%3Cpath d='M1 2l3 3 3-3' fill='none' stroke='%23555'/%3E%3C/svg%3E") no-repeat right 1px center; }
select.indent { padding-left: 13px; }
select.tight { padding-left: 2px; }
select.solid { padding-left: 1px; background-image: url("data:image/svg+xml,%3Csvg xmlns='http://www.w3.org/2000/svg' width='8' height='8'%3E%3Cpath d='M1 2h6L4 6z' fill='%23333'/%3E%3C/svg%3E"); }
.info { display: flex; align-items: center; width: 302px; background: linear-gradient(#aaa, #8e8e8e); margin-left: auto; margin-right: 28px; }
.info > button { width: 18px; }
.info > .narrow { width: 11px; }
.keyword { flex: 1; min-width: 0; height: 15px; background: #fff; padding: 0 2px; font-style: italic; border: 1px solid #888; }
.keyword::placeholder { color: #777; opacity: 1; }
.info > .login { width: 90px; gap: 2px; color: #eee; justify-content: flex-start; }
.login .ddi { margin-left: auto; margin-right: 3px; }
.info > .helpbtn { width: 27px; padding-left: 4px; border-left: 1px solid #777; }
.winctl { display: flex; align-items: center; gap: 22px; padding-right: 12px; }
.winctl svg { width: 12px; height: 12px; fill: none; stroke: #999; }
.menu { display: flex; align-items: center; gap: 18px; height: 16px; padding-left: 10px; color: #ececec; background: linear-gradient(#707070, #8a8a8a 50%, #666); }
.docctl { display: flex; gap: 1px; margin-left: auto; padding-right: 1px; }
.docctl svg { width: 12px; height: 12px; fill: none; stroke: #333; stroke-width: 2; }
.docctl button:nth-child(2) svg { stroke-width: 1; }

.bar { display: flex; height: 20px; padding-bottom: 3px; background: #666; }
.grip { width: 6px; background: repeating-linear-gradient(90deg, #4c4c4c 0 1px, #686868 1px 3px); }
.panel { display: flex; background: #ebebeb; }
.panel > button { width: 17px; }
.panel > .narrow { width: 9px; }
.sep { width: 4px; border-left: 1px solid #b0b0b0; margin: 2px 0; }
.lgrip { width: 5px; background: #ddd; border-left: 1px solid #999; border-right: 1px solid #aaa; }
.combo { display: flex; align-items: center; background: #e0e0e0; border: 1px solid #c8c8c8; }
.combo.off { background: #c9c9c9; color: #858585; }
.combo .ic + select { padding-left: 1px; }
.w-style { width: 87px; }
.w-space { width: 128px; }
.w-layer { width: 220px; padding-left: 2px; }
.w-color { width: 112px; }
.w-weight { width: 90px; }
.serif { font-family: "Liberation Serif", serif; }
.serif .ic { margin-left: 1px; }
.swatch { width: 26px; height: 1px; background: #222; margin-left: 2px; }
.swatch.long { width: 44px; }
.swatch + select { padding-left: 3px; }

.work { display: flex; flex: 1; align-items: stretch; background: #6b6b6b; }
.side { width: 18px; display: flex; flex-direction: column; align-self: flex-start; background: #ededed; }
.side button { height: 16px; padding-top: 1px; }
.side .ic { width: 13px; height: 13px; }
.side .mtext { font: bold 14px/16px "Liberation Sans", sans-serif; color: #3d4045; padding: 0; }
.hgrip { height: 7px; background: repeating-linear-gradient(#4c4c4c 0 1px, #747474 1px 3px); }
.right { margin: 0 2px 0 3px; width: 19px; border-left: 1px solid #555; }
.hsep { height: 1px; background: #bbb; margin: 2px 0; }
.side .abc { flex-direction: column; height: 18px; font: bold 6px/7px "Liberation Sans", sans-serif; }
.side .abc .ic { height: 7px; }
.center { flex: 1; min-width: 0; margin-left: 4px; display: flex; flex-direction: column; }
.viewrow { flex: 1; display: flex; border-top: 1px solid #999; }
.canvas { flex: 1; position: relative; overflow: hidden; background: #000; border-bottom: 1px solid #501010; }
.gridlines { position: absolute; inset: 0; width: 100%; height: 100%; }
.viewlabel { position: absolute; left: 4px; top: 4px; color: #ddd; }
.hatchfill { position: absolute; left: 320px; top: 76px; width: 169px; height: 124px; border: 1px solid #d5d5e8; background: radial-gradient(circle at center, #ff0 0, #f4f40b 20px, #dcdc23 32px, #b2b24d 44px, #7d7d82 57px, #4343bc 70px, #00f 85px); }
.crosshair { position: absolute; left: 714px; top: 191px; width: 30px; height: 30px; }
.ucs { position: absolute; left: 6px; bottom: 4px; width: 60px; height: 56px; }
.viewcube { position: absolute; right: 7px; top: 6px; width: 76px; height: 104px; }
.cubetext { font: 11px "Noto Sans CJK SC", sans-serif; fill: #aaa; text-anchor: middle; }
.cubetext .up { font-size: 19px; fill: #4a4d52; }
.wcs { font: 8px "Liberation Sans", sans-serif; fill: #484850; }
.navbar { position: absolute; right: 3px; top: 124px; width: 24px; height: 156px; }
.vscroll { width: 13px; background: #f0f0f0; display: flex; flex-direction: column; align-items: center; padding: 3px 0 2px; }
.vscroll svg, .hscroll svg { width: 8px; height: 8px; fill: none; stroke: #333; }
.vthumb { width: 11px; height: 12px; background: #cdcdcd; margin-top: auto; margin-bottom: 101px; }
.tabs { display: flex; height: 12px; background: #f0f0f0; font-size: 9px; }
.tabnav { display: flex; margin-right: 3px; }
.tabnav button { width: 10px; border-right: 1px solid #aaa; }
.tabnav svg { width: 8px; height: 8px; fill: #777; stroke: #777; }
.tab { width: 33px; background: linear-gradient(110deg, transparent 3px, #444 3px 4px, transparent 4px); }
.tab.on { background: #000; color: #fff; width: 31px; clip-path: polygon(0 0, 100% 0, 88% 100%, 12% 100%); }
.slash { width: 6px; background: linear-gradient(110deg, transparent 3px, #444 3px 4px, transparent 4px); }
.hscroll { width: 333px; margin-left: auto; padding-right: 14px; display: flex; align-items: center; gap: 2px; }
.split { width: 4px; height: 10px; background: #bbb; border: 1px solid #888; }
.hthumb { width: 12px; height: 9px; background: #cdcdcd; margin-left: auto; margin-right: 116px; }

.cmd { display: flex; border-top: 3px solid #686868; background: #c8c8c8; font: 10px/11px "Liberation Mono", "Noto Sans CJK SC", monospace; }
.cmdgrip { width: 12px; background: linear-gradient(#666, #666) 1px 2px / 9px 1px no-repeat, linear-gradient(#666, #666) 1px 4px / 9px 1px no-repeat, #bdbdbd; }
.cmdbody { flex: 1; }
.history { height: 30px; padding-top: 1px; border-bottom: 1px solid #aaa; }
.prompt { display: flex; align-items: center; height: 12px; background: #fff; }
.prompt input { flex: 1; height: 11px; }
.status { display: flex; align-items: stretch; height: 17px; background: linear-gradient(#989898, #747474); border-top: 1px solid #777; }
.coords { width: 160px; padding-left: 8px; font: 7px/18px "Liberation Mono", monospace; color: #aaa; }
.toggles { display: flex; }
.toggles button { width: 16px; background: #b5b5b5; border-right: 1px solid #848484; }
.toggles .ic { width: 13px; height: 13px; }
.toggles .lit { background: #c4ebf6; }
.models { display: flex; margin-left: auto; margin-right: 201px; }
.models button { width: 18px; background: #b5b5b5; border-left: 1px solid #777; }
.models .model { width: 21px; white-space: nowrap; }
.taskbar { display: flex; height: 29px; background: #04171c; }
.start { width: 35px; }
.start svg { width: 13px; height: 13px; }
.search { width: 252px; background: #f1f1f1; display: flex; align-items: center; padding: 0 6px; gap: 4px; }
.search svg { width: 18px; height: 18px; }
.search input { flex: 1; min-width: 0; height: 20px; font-size: 10px; padding-left: 1px; }
.search input::placeholder { color: #3c3c3c; opacity: 1; }
.task { width: 36px; background: linear-gradient(#8fd8e2, #8fd8e2) center bottom / 29px 2px no-repeat; }
.task svg { width: 20px; height: 20px; }
.task.active { background: linear-gradient(#8fd8e2, #8fd8e2) center bottom / 36px 2px no-repeat, #38474c; }

.arrow { position: absolute; left: 0; top: 0; width: 1000px; height: 562px; pointer-events: none; }
.wm { position: absolute; right: 126px; bottom: 0; width: 106px; height: 106px; pointer-events: none; color: rgba(255, 255, 255, .8); font-family: "Liberation Sans", sans-serif; overflow: hidden; }
.paw { position: absolute; right: 0; top: 0; width: 32px; height: 14px; fill: #f6f6f6; }
.wm-big { position: absolute; left: 0; top: 24px; font-size: 41px; line-height: 34px; font-weight: bold; text-shadow: 0 0 2px #888; }
.wm-small { position: absolute; left: 0; top: 60px; font-size: 22px; line-height: 22px; }
.brand { position: absolute; right: 0; bottom: 0; width: 200px; height: 95px; background: #222f56; color: #d0d0d0; display: flex; align-items: center; gap: 7px; padding-left: 12px; }
.brand svg { width: 45px; height: 60px; }
.brandtext { display: flex; flex-direction: column; gap: 3px; white-space: nowrap; }
.brandname { display: flex; align-items: center; font: bold 28px/30px "Noto Sans CJK SC", sans-serif; }
.brandname span { font: 35px/30px Roboto, sans-serif; }
.brandurl { font: 22px/22px "DejaVu Sans", sans-serif; }
```
